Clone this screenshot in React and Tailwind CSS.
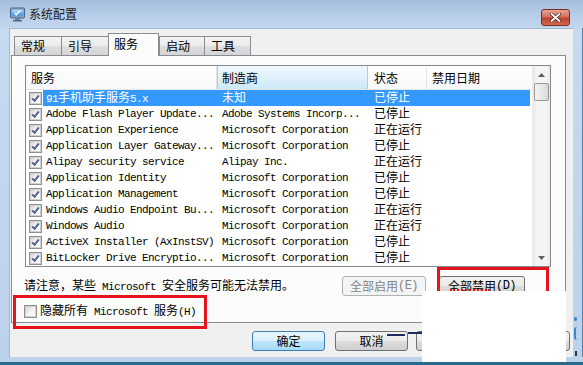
import React from "react";

const MONO = "font-['Liberation_Mono','Noto_Sans_CJK_SC',monospace]";
const CJKF = "font-['Noto_Sans_CJK_SC','Noto_Sans',sans-serif]";
const RE = /([\u2E80-\u9FFF\u3000-\u303F\uFF00-\uFFEF]+)/;

function Mix({ text }) {
  return text.split(RE).map((p, i) =>
    i % 2 === 1 ? (
      <span key={i} className="font-['Noto_Sans_CJK_SC','Noto_Sans',sans-serif] text-[12px] tracking-normal">
        {p}
      </span>
    ) : (
      <span key={i}>{p}</span>
    )
  );
}

function Check({ checked }) {
  return (
    <span className="flex h-[13px] w-[13px] shrink-0 items-center justify-center border border-[#8e8f8f] bg-white">
      <span className="flex h-[11px] w-[11px] items-center justify-center border border-[#cfd1d3] bg-[linear-gradient(135deg,#d8d8d8,#f7f7f7_60%,#ffffff)]">
        {checked && (
          <svg width="9" height="9" viewBox="0 0 9 9">
            <path d="M1.2 4.3 L3.6 6.8 L7.9 1.4" fill="none" stroke="#4a5f8f" strokeWidth="1.9" />
          </svg>
        )}
      </span>
    </span>
  );
}

const rows = [
  ["91手机助手服务5.x", "未知", "已停止"],
  ["Adobe Flash Player Update...", "Adobe Systems Incorp...", "已停止"],
  ["Application Experience", "Microsoft Corporation", "正在运行"],
  ["Application Layer Gateway...", "Microsoft Corporation", "已停止"],
  ["Alipay security service", "Alipay Inc.", "正在运行"],
  ["Application Identity", "Microsoft Corporation", "已停止"],
  ["Application Management", "Microsoft Corporation", "已停止"],
  ["Windows Audio Endpoint Bu...", "Microsoft Corporation", "正在运行"],
  ["Windows Audio", "Microsoft Corporation", "正在运行"],
  ["ActiveX Installer (AxInstSV)", "Microsoft Corporation", "已停止"],
  ["BitLocker Drive Encryptio...", "Microsoft Corporation", "已停止"],
];

function Tab({ label, w, selected }) {
  if (selected) {
    return (
      <div
        className={`relative z-10 flex h-[23px] items-start border border-b-0 border-[#898c95] bg-[#fcfcfc] pl-[5px] pt-[1px] text-[12px] leading-[18px] text-black ${CJKF}`}
        style={{ width: w }}
      >
        {label}
      </div>
    );
  }
  return (
    <div
      className={`mt-[3px] flex h-[19px] items-start border border-b-0 border-r-0 border-[#898c95] bg-[linear-gradient(to_bottom,#f3f3f3,#ebebeb_50%,#dddddd_51%,#d5d5d5)] pl-[6px] pt-[0px] text-[12px] leading-[18px] text-black last:border-r ${CJKF}`}
      style={{ width: w }}
    >
      {label}
    </div>
  );
}

function Btn({ children, w, kind }) {
  const base = "flex h-[20px] shrink-0 items-center justify-center rounded-[3px] border text-[12px] leading-none";
  if (kind === "default")
    return (
      <div className={`${base} border-[#3c7fb1] bg-[linear-gradient(to_bottom,#eaf6fd,#d9f0fc_50%,#bee6fd_51%,#a7d9f5)] text-black ${CJKF}`} style={{ width: w }}>
        {children}
      </div>
    );
  if (kind === "disabled")
    return (
      <div className={`${base} border-[#adb2b5] bg-[#f4f4f4] text-[#838383] ${MONO} text-[11px] tracking-[-0.6px]`} style={{ width: w }}>
        {children}
      </div>
    );
  return (
    <div className={`${base} border-[#707070] bg-[linear-gradient(to_bottom,#f2f2f2,#ebebeb_50%,#dddddd_51%,#cfcfcf)] text-black ${MONO} text-[11px] tracking-[-0.6px]`} style={{ width: w }}>
      {children}
    </div>
  );
}

function Arrow({ up }) {
  return (
    <svg width="7" height="4" viewBox="0 0 7 4">
      {up ? <path d="M0 4 L3.5 0 L7 4 Z" fill="#606060" /> : <path d="M0 0 L3.5 4 L7 0 Z" fill="#606060" />}
    </svg>
  );
}

export default function App() {
  return (
    <div className="relative h-[365px] w-[583px] overflow-hidden bg-[#c4d8ee]">
      {/* title bar */}
      <div className="flex h-[28px] items-center bg-[linear-gradient(to_bottom,#a3bedd,#b6cde8_50%,#c3d7ee)] pl-[10px]">
        <svg width="15" height="15" viewBox="0 0 15 15" className="mt-[1px]">
          <rect x="0.5" y="1" width="14" height="10" rx="1" fill="#8ea4bf" stroke="#4e6686" />
          <rect x="2" y="2.5" width="11" height="7" fill="#5a9fe0" />
          <rect x="2" y="2.5" width="11" height="3" fill="#9fd0f7" />
          <path d="M4.5 6 L6.3 7.8 L10 3.8" fill="none" stroke="#ffffff" strokeWidth="1.4" />
          <rect x="5" y="11" width="5" height="2" fill="#6f84a0" />
          <rect x="3" y="13" width="9" height="1.5" fill="#53698a" />
        </svg>
        <span className={`ml-[4px] text-[12px] leading-none text-[#1a1a1a] ${CJKF}`}>系统配置</span>
        <div className="ml-auto mr-[13px] mt-[7px] flex h-[17px] w-[29px] items-center justify-center rounded-[3px] border border-[#7c2b20] bg-[linear-gradient(to_bottom,#e8a493,#d4705c_45%,#c0412c_55%,#d46a4f)]">
          <svg width="11" height="9" viewBox="0 0 11 9">
            <path d="M1.5 1 L9.5 8 M9.5 1 L1.5 8" stroke="#3a1510" strokeWidth="3" strokeLinecap="round" />
            <path d="M1.5 1 L9.5 8 M9.5 1 L1.5 8" stroke="#ffffff" strokeWidth="1.8" strokeLinecap="round" />
          </svg>
        </div>
      </div>

      {/* middle */}
      <div className="flex h-[329px]">
        <div className="w-[9px] bg-[linear-gradient(to_bottom,#c6daf0,#bcd2ea)]" />
        <div className="flex w-[564px] flex-col border-l border-t border-[#a3b9d3] bg-[#f0f0f0] pl-[1px]">
          {/* tabs */}
          <div className="-mb-px flex pl-[3px] pt-[4px]">
            <Tab label="常规" w={47} />
            <Tab label="引导" w={47} />
            <Tab label="服务" w={51} selected />
            <Tab label="启动" w={45} />
            <Tab label="工具" w={47} />
          </div>
          {/* panel */}
          <div className="flex h-[268px] w-[555px] flex-col border border-[#898c95] bg-[#fcfcfc]">
            {/* list */}
            <div className="ml-[13px] mt-[9px] flex h-[202px] w-[526px] border border-[#828790] bg-white">
              <div className="flex w-[506px] flex-col">
                <div className={`flex h-[24px] border-b border-[#e5e5e5] bg-[linear-gradient(to_bottom,#ffffff,#f7f8fa)] text-[12px] text-black ${CJKF}`}>
                  <div className="flex w-[191px] items-center border-r border-[#e5e5e5] pl-[5px]">服务</div>
                  <div className="flex w-[151px] items-center border-x border-[#9fd3ec] bg-[linear-gradient(to_bottom,#eef8fd,#dff1fb_50%,#cbe8f8)] pl-[4px]">制造商</div>
                  <div className="flex w-[59px] items-center border-r border-[#e5e5e5] pl-[6px]">状态</div>
                  <div className="flex flex-1 items-center pl-[5px]">禁用日期</div>
                </div>
                {rows.map((r, i) => {
                  const sel = i === 0;
                  return (
                    <div key={i} className="flex h-[16px] items-center">
                      <div className="flex w-[17px] items-center pl-[3px]">
                        <Check checked />
                      </div>
                      <div
                        className={`flex h-[16px] w-[487px] items-center text-[11px] leading-none tracking-[-0.6px] ${MONO} ${
                          sel ? "bg-[#3399ff] text-white" : "text-black"
                        }`}
                      >
                        <div className="w-[174px] whitespace-pre pl-[3px]">
                          <Mix text={r[0]} />
                        </div>
                        <div className="w-[151px] whitespace-pre pl-[5px]">
                          <Mix text={r[1]} />
                        </div>
                        <div className="w-[59px] whitespace-pre pl-[6px]">
                          <Mix text={r[2]} />
                        </div>
                      </div>
                    </div>
                  );
                })}
              </div>
              {/* scrollbar */}
              <div className="flex w-[18px] flex-col border-l border-[#ececec] bg-[linear-gradient(to_right,#e6e6e6,#f4f4f4_20%,#f4f4f4_80%,#e9e9e9)]">
                <div className="flex h-[17px] items-center justify-center">
                  <Arrow up />
                </div>
                <div className="mx-[1px] h-[18px] rounded-[2px] border border-[#979797] bg-[linear-gradient(to_right,#f3f3f3,#e8e8e8_50%,#d9d9d9)]" />
                <div className="flex-1" />
                <div className="flex h-[17px] items-center justify-center">
                  <Arrow />
                </div>
              </div>
            </div>

            {/* notice + buttons */}
            <div className="mt-[9px] flex h-[20px] items-center">
              <div className={`flex-1 whitespace-pre pl-[12px] text-[11px] leading-none tracking-[-0.6px] text-black ${MONO}`}>
                <Mix text="请注意，某些 Microsoft 安全服务可能无法禁用。" />
              </div>
              <Btn w={84} kind="disabled">
                <Mix text="全部启用(E)" />
              </Btn>
              <div className="ml-[13px] mr-[40px]">
                <Btn w={86}>
                  <Mix text="全部禁用(D)" />
                </Btn>
              </div>
            </div>

            {/* hide ms */}
            <div className="mt-[8px] flex h-[14px] items-center pl-[12px]">
              <Check />
              <span className={`ml-[3px] whitespace-pre text-[11px] leading-none tracking-[-0.6px] text-black ${MONO}`}>
                <Mix text="隐藏所有 Microsoft 服务(H)" />
              </span>
            </div>
          </div>

          {/* bottom buttons */}
          <div className="ml-[241px] mt-[8px] flex">
            <Btn w={73} kind="default">确定</Btn>
            <div className="ml-[10px]">
              <Btn w={73}>
                <Mix text="取消" />
              </Btn>
            </div>
            <div className="ml-[8px]">
              <Btn w={73}>
                <Mix text="应用(A)" />
              </Btn>
            </div>
            <div className="ml-[8px]">
              <Btn w={73}>
                <Mix text="帮助" />
              </Btn>
            </div>
          </div>
        </div>
        <div className="w-[10px] border-r border-[#5a7fa6] bg-[linear-gradient(to_bottom,#c6daf0,#bcd2ea)]" />
      </div>

      {/* bottom frame */}
      <div className="h-[5px] bg-[#bdd3eb]" />
      <div className="h-[3px] bg-[#2b6a8c]" />

      {/* overlays */}
      <div className="absolute left-[437px] top-[267px] h-[40px] w-[112px] border-[3px] border-[#e5141c]" />
      <div className="absolute left-[13px] top-[295px] h-[34px] w-[194px] border-[3px] border-[#e5141c]" />
      <div className="absolute left-[450px] top-[289px] h-[2px] w-[40px] border-b-2 border-dotted border-[#e5141c]" />
      <div className="absolute left-[422px] top-[291px] h-[71px] w-[144px] bg-white" />
      <div className="absolute left-[387px] top-[334px] h-[2px] w-[18px] bg-[#1c2a5e]" />
      <div className="absolute left-[408px] top-[332px] h-[2px] w-[14px] bg-[#1c2a5e]" />
      <div className="absolute left-[574px] top-[317px] h-[4px] w-[3px] rounded-full bg-[#3a86d4]" />
      <div className="absolute left-[574px] top-[327px] h-[13px] w-[3px] rounded-l-full border-l-2 border-[#3a86d4]" />
      <div className="absolute left-[575px] top-[351px] h-[5px] w-[2px] bg-[#2a3550]" />
    </div>
  );
}
